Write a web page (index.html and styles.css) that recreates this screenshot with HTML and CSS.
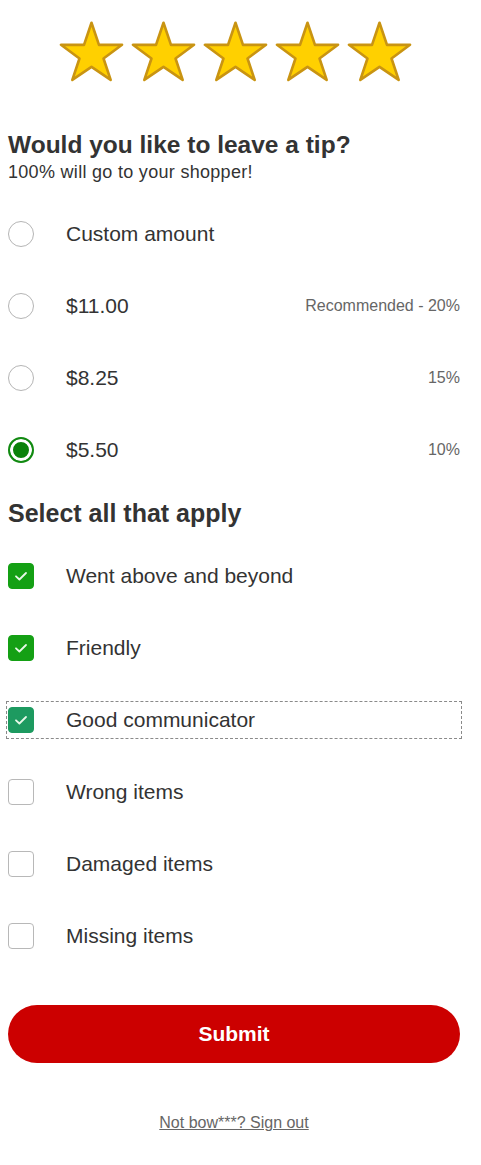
FILE: index.html
```html
<!DOCTYPE html>
<html>
<head>
<meta charset="utf-8">
<link rel="stylesheet" href="styles.css">
</head>
<body>
<div class="page">
  <div class="stars">
    <svg class="star" viewBox="0 0 100 95"><polygon points="50,4 61.5,38 97,38 68.5,59 79.5,92 50,72 20.5,92 31.5,59 3,38 38.5,38"/></svg>
    <svg class="star" viewBox="0 0 100 95"><polygon points="50,4 61.5,38 97,38 68.5,59 79.5,92 50,72 20.5,92 31.5,59 3,38 38.5,38"/></svg>
    <svg class="star" viewBox="0 0 100 95"><polygon points="50,4 61.5,38 97,38 68.5,59 79.5,92 50,72 20.5,92 31.5,59 3,38 38.5,38"/></svg>
    <svg class="star" viewBox="0 0 100 95"><polygon points="50,4 61.5,38 97,38 68.5,59 79.5,92 50,72 20.5,92 31.5,59 3,38 38.5,38"/></svg>
    <svg class="star" viewBox="0 0 100 95"><polygon points="50,4 61.5,38 97,38 68.5,59 79.5,92 50,72 20.5,92 31.5,59 3,38 38.5,38"/></svg>
  </div>

  <h2 class="title">Would you like to leave a tip?</h2>
  <p class="subtitle">100% will go to your shopper!</p>

  <div class="options">
    <div class="row">
      <span class="radio"></span>
      <span class="label">Custom amount</span>
    </div>
    <div class="row">
      <span class="radio"></span>
      <span class="label">$11.00</span>
      <span class="note">Recommended - 20%</span>
    </div>
    <div class="row">
      <span class="radio"></span>
      <span class="label">$8.25</span>
      <span class="note">15%</span>
    </div>
    <div class="row">
      <span class="radio checked"></span>
      <span class="label">$5.50</span>
      <span class="note">10%</span>
    </div>
  </div>

  <h3 class="section">Select all that apply</h3>

  <div class="options">
    <div class="row"><div class="check-item"><span class="box on"><svg viewBox="0 0 20 20"><path d="M5 10.3l3.4 3.2L15 7"/></svg></span><span class="label">Went above and beyond</span></div></div>
    <div class="row"><div class="check-item"><span class="box on"><svg viewBox="0 0 20 20"><path d="M5 10.3l3.4 3.2L15 7"/></svg></span><span class="label">Friendly</span></div></div>
    <div class="row"><div class="check-item focus"><span class="box on focused"><svg viewBox="0 0 20 20"><path d="M5 10.3l3.4 3.2L15 7"/></svg></span><span class="label">Good communicator</span></div></div>
    <div class="row"><div class="check-item"><span class="box"></span><span class="label">Wrong items</span></div></div>
    <div class="row"><div class="check-item"><span class="box"></span><span class="label">Damaged items</span></div></div>
    <div class="row"><div class="check-item"><span class="box"></span><span class="label">Missing items</span></div></div>
  </div>

  <button class="submit">Submit</button>

  <div class="footer"><a href="#" class="signout">Not bow***? Sign out</a></div>
</div>
</body>
</html>
```

FILE: styles.css
```css
* { box-sizing: border-box; }
html, body { margin: 0; padding: 0; background: #fff; }
body {
  font-family: "Liberation Sans", Arial, sans-serif;
  color: #333;
}
.page {
  width: 481px;
  padding: 20px 21px 0 8px;
}
.stars {
  display: flex;
  justify-content: center;
  gap: 7px;
  height: 62px;
  margin-left: 2px;
}
.star {
  width: 65px;
  height: 62px;
}
.star polygon {
  fill: #ffd000;
  stroke: #c99412;
  stroke-width: 4;
  stroke-linejoin: round;
}
.title {
  margin: 48px 0 0;
  font-size: 24.5px;
  font-weight: bold;
  line-height: 30px;
  color: #333;
}
.subtitle {
  margin: 0;
  font-size: 18px;
  letter-spacing: 0.3px;
  line-height: 24px;
  color: #333;
}
.options {
  display: flex;
  flex-direction: column;
  margin-top: 14px;
}
.row {
  height: 72px;
  display: flex;
  align-items: center;
}
.radio {
  width: 26px;
  height: 26px;
  border-radius: 50%;
  border: 1.5px solid #b5b5b5;
  flex: none;
  background: #fff;
}
.radio.checked {
  border: 2px solid #118a11;
  background: #0a820a;
  box-shadow: inset 0 0 0 3px #fff;
}
.label {
  margin-left: 32px;
  font-size: 21px;
  color: #333;
}
.note {
  margin-left: auto;
  font-size: 16px;
  color: #666;
}
.section {
  margin: 12px 0 0;
  font-size: 25px;
  font-weight: bold;
  line-height: 30px;
  color: #333;
}
.section + .options { margin-top: 12px; }
.check-item {
  display: flex;
  align-items: center;
  width: 100%;
  height: 34px;
}
.check-item.focus {
  outline: 1px dashed #8a8a8a;
  outline-offset: 1px;
}
.box {
  width: 26px;
  height: 26px;
  border: 1.5px solid #b8b8b8;
  border-radius: 4px;
  flex: none;
  display: flex;
  align-items: center;
  justify-content: center;
}
.box svg { width: 20px; height: 20px; display: none; }
.box path { fill: none; stroke: #e8f8e8; stroke-width: 1.8; stroke-linecap: round; stroke-linejoin: round; }
.box.on { background: #14a014; border-color: #14a014; }
.box.on svg { display: block; }
.box.focused { background: #1d9a60; border-color: #1d9a60; }
.submit {
  display: block;
  width: 452px;
  height: 58px;
  margin-top: 33px;
  border: none;
  border-radius: 29px;
  background: #cc0000;
  color: #fff;
  font-family: "Liberation Sans", Arial, sans-serif;
  font-size: 21px;
  font-weight: bold;
}
.footer {
  text-align: center;
  margin-top: 50px;
  line-height: 20px;
}
.signout {
  font-size: 16px;
  color: #666;
  text-decoration: underline;
}
```
